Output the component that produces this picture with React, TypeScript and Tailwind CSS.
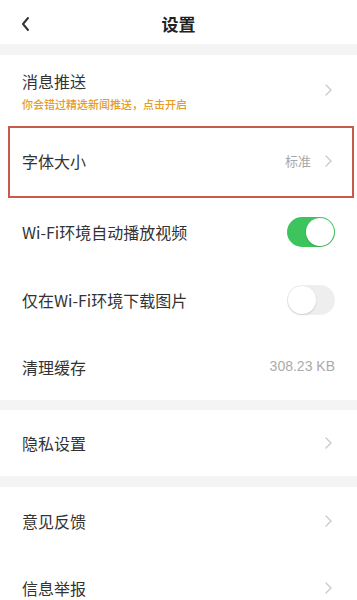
import React, { useState } from "react";

const Chevron = ({ className = "" }: { className?: string }) => (
  <svg
    className={className}
    width="7"
    height="12"
    viewBox="0 0 7 12"
    fill="none"
    stroke="currentColor"
    strokeWidth="1.3"
    strokeLinecap="round"
    strokeLinejoin="round"
  >
    <path d="M1 1l5 5-5 5" />
  </svg>
);

const Toggle = ({ on, onClick }: { on: boolean; onClick: () => void }) => (
  <button
    type="button"
    onClick={onClick}
    className={
      "relative w-[48px] h-[30px] rounded-full transition-colors " +
      (on ? "bg-[#3dc45c]" : "bg-[#eeeeee]")
    }
  >
    <span
      className={
        "absolute top-[1px] w-[28px] h-[28px] rounded-full bg-white shadow-[0_1px_2px_rgba(0,0,0,0.15)] " +
        (on ? "left-[19px]" : "left-[1px]")
      }
    />
  </button>
);

const Band = ({ h }: { h: string }) => <div className={"bg-[#f4f4f4] " + h} />;

export default function App() {
  const [autoPlay, setAutoPlay] = useState(true);
  const [wifiOnly, setWifiOnly] = useState(false);

  return (
    <div
      className="w-[357px] h-[600px] overflow-hidden bg-white text-[#333]"
      style={{ fontFamily: '"Noto Sans CJK SC", "Noto Sans", sans-serif' }}
    >
      {/* header */}
      <div className="h-[44px] flex items-center relative pt-[4px]">
        <div className="pl-[20px] text-[#333]">
          <svg width="10" height="16" viewBox="0 0 10 16" fill="none" stroke="currentColor" strokeWidth="2" strokeLinecap="round" strokeLinejoin="round">
            <path d="M8 2L3 8l5 6" />
          </svg>
        </div>
        <div className="absolute left-0 right-0 text-center text-[17px] font-bold text-[#222] pointer-events-none">
          设置
        </div>
      </div>
      <Band h="h-[11px]" />

      {/* 消息推送 */}
      <div className="h-[70px] flex items-center pl-[22px] pr-[25px]">
        <div className="flex-1 flex flex-col pt-[2px]">
          <span className="text-[16px] leading-[22px]">消息推送</span>
          <span className="text-[11px] leading-[15px] mt-[5px] font-medium text-[#e59c28]">
            你会错过精选新闻推送，点击开启
          </span>
        </div>
        <Chevron className="text-[#c8c8c8]" />
      </div>

      {/* 字体大小 */}
      <div className="h-[72px] relative flex items-center pl-[22px] pr-[25px]">
        <span className="flex-1 text-[16px]">字体大小</span>
        <span className="text-[13px] text-[#a8a8a8] mr-[14px]">标准</span>
        <Chevron className="text-[#c8c8c8]" />
        <div className="absolute left-[8px] right-[3px] top-[1px] bottom-[-1px] border-2 border-[#c9594b]" />
      </div>

      <div className="h-[69px] flex items-center pl-[22px] pr-[22px]">
        <span className="flex-1 text-[16px]">Wi-Fi环境自动播放视频</span>
        <Toggle on={autoPlay} onClick={() => setAutoPlay(!autoPlay)} />
      </div>

      <div className="h-[67px] flex items-center pl-[22px] pr-[22px]">
        <span className="flex-1 text-[16px]">仅在Wi-Fi环境下载图片</span>
        <Toggle on={wifiOnly} onClick={() => setWifiOnly(!wifiOnly)} />
      </div>

      <div className="h-[67px] flex items-center pl-[22px] pr-[22px]">
        <span className="flex-1 text-[16px]">清理缓存</span>
        <span className="text-[14px] text-[#ababab]" style={{ fontFamily: '"Liberation Sans", Arial, sans-serif' }}>
          308.23 KB
        </span>
      </div>
      <Band h="h-[10px]" />

      <div className="h-[66px] flex items-center pl-[22px] pr-[25px]">
        <span className="flex-1 text-[16px]">隐私设置</span>
        <Chevron className="text-[#c8c8c8]" />
      </div>
      <Band h="h-[11px]" />

      <div className="h-[67px] flex items-center pl-[22px] pr-[25px]">
        <span className="flex-1 text-[16px]">意见反馈</span>
        <Chevron className="text-[#c8c8c8]" />
      </div>
      <div className="h-[67px] flex items-center pl-[22px] pr-[25px]">
        <span className="flex-1 text-[16px]">信息举报</span>
        <Chevron className="text-[#c8c8c8]" />
      </div>
    </div>
  );
}
